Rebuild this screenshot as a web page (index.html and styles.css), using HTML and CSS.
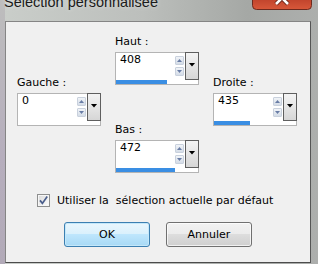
FILE: index.html
```html
<!DOCTYPE html>
<html lang="fr">
<head>
    <meta charset="UTF-8">
    <meta name="viewport" content="width=device-width, initial-scale=1.0">
    <title>Sélection personnalisée</title>
    <link rel="stylesheet" href="styles.css">
</head>
<body>
    <div class="window">
        <div class="titlebar">
            <span class="title">Sélection personnalisée</span>
            <svg class="close" width="60" height="10" viewBox="0 0 60 10">
                <defs>
                    <linearGradient id="closeFill" x1="0" y1="0" x2="0" y2="1">
                        <stop offset="0" stop-color="#c0432c"/>
                        <stop offset="1" stop-color="#d8583a"/>
                    </linearGradient>
                </defs>
                <path d="M0.5 -1 V5.5 Q0.5 9.5 4.5 9.5 H55.5 Q59.5 9.5 59.5 5.5 V-1" fill="url(#closeFill)" stroke="#6e2a1e"/>
                <path d="M24 4 L36 -8 M36 4 L24 -8" stroke="#6a2518" stroke-width="4.4"/>
                <path d="M24 4 L36 -8 M36 4 L24 -8" stroke="#ffffff" stroke-width="2.6"/>
            </svg>
        </div>

        <div class="client">
            <div class="fields">
                <!-- left column -->
                <div class="col col-side">
                    <div class="field">
                        <div class="field-label">Gauche :</div>
                        <div class="spin">
                            <span class="spin-value">0</span>
                            <span class="spin-arrows"><span class="arrow up"></span><span class="arrow down"></span></span>
                            <span class="spin-drop"></span>
                            <span class="spin-track"><span class="spin-bar" style="width: 0px"></span></span>
                        </div>
                    </div>
                </div>

                <!-- middle column -->
                <div class="col col-mid">
                    <div class="field">
                        <div class="field-label">Haut :</div>
                        <div class="spin">
                            <span class="spin-value">408</span>
                            <span class="spin-arrows"><span class="arrow up"></span><span class="arrow down"></span></span>
                            <span class="spin-drop"></span>
                            <span class="spin-track"><span class="spin-bar" style="width: 51px"></span></span>
                        </div>
                    </div>
                    <div class="field">
                        <div class="field-label">Bas :</div>
                        <div class="spin">
                            <span class="spin-value">472</span>
                            <span class="spin-arrows"><span class="arrow up"></span><span class="arrow down"></span></span>
                            <span class="spin-drop"></span>
                            <span class="spin-track"><span class="spin-bar" style="width: 59px"></span></span>
                        </div>
                    </div>
                </div>

                <!-- right column -->
                <div class="col col-side">
                    <div class="field">
                        <div class="field-label">Droite :</div>
                        <div class="spin">
                            <span class="spin-value">435</span>
                            <span class="spin-arrows"><span class="arrow up"></span><span class="arrow down"></span></span>
                            <span class="spin-drop"></span>
                            <span class="spin-track"><span class="spin-bar" style="width: 36px"></span></span>
                        </div>
                    </div>
                </div>
            </div>

            <label class="check-row">
                <svg class="checkbox" width="13" height="13" viewBox="0 0 13 13">
                    <defs>
                        <linearGradient id="boxFill" x1="0" y1="0" x2="1" y2="1">
                            <stop offset="0" stop-color="#dcdcdc"/>
                            <stop offset="1" stop-color="#fbfbfb"/>
                        </linearGradient>
                    </defs>
                    <rect x="0.5" y="0.5" width="12" height="12" fill="#f6f6f6" stroke="#8e8f8f"/>
                    <rect x="2" y="2" width="9" height="9" fill="url(#boxFill)"/>
                    <path d="M3 6.4 L5.4 9.4 L10.2 2.6" fill="none" stroke="#4a5e8c" stroke-width="1.7"/>
                </svg>
                <span>Utiliser la&nbsp; sélection actuelle par défaut</span>
            </label>

            <div class="buttons">
                <button class="btn btn-default">OK</button>
                <button class="btn">Annuler</button>
            </div>
        </div>
    </div>
</body>
</html>
```

FILE: styles.css
```css
body {
    margin: 0;
    font-family: "DejaVu Sans", sans-serif;
    font-size: 11px;
    color: #000;
}

.window {
    width: 318px;
    height: 264px;
    box-sizing: border-box;
    padding: 0 7px 1px 5px;
    display: flex;
    flex-direction: column;
    overflow: hidden;
    background:
        linear-gradient(to bottom, #bdbdbd, #b6aebd 60%, #b2aab8) 0 0 / 5px 100% no-repeat,
        linear-gradient(to right, #caceca 0%, #bcbfbc 45%, #a5a8a5 78%, #adafad 100%);
}

/* Title bar (cut at the top in the capture) */
.titlebar {
    height: 21px;
    margin: 0 -7px 0 -5px;
    padding-left: 4px;
    display: flex;
    justify-content: space-between;
    align-items: flex-start;
}

.title {
    font-family: "Liberation Sans", Arial, sans-serif;
    font-size: 14.5px;
    line-height: 16px;
    margin-top: -6px;
    color: #1b1b1b;
    text-shadow: 0 0 5px rgba(255, 255, 255, 0.6);
}

.close {
    display: block;
    margin-right: 6px;
}

/* Client area */
.client {
    flex: 1;
    background: #f0f0f0;
    border: 1px solid #858585;
    border-right-color: #555;
    border-bottom-color: #4c4c4c;
}

.fields {
    display: flex;
    gap: 14px;
    padding: 13px 0 0 11px;
}

.col {
    display: flex;
    flex-direction: column;
}

.col-side {
    margin-top: 41px;
}

.col-mid {
    gap: 38px;
}

.field-label {
    line-height: 14px;
    margin-bottom: 3px;
}

/* Spin box with dropdown and value bar */
.spin {
    width: 84px;
    height: 33px;
    box-sizing: border-box;
    border: 1px solid #b4b4b4;
    background: #fff;
    display: grid;
    grid-template-columns: 1fr 9px 13px;
    grid-template-rows: 27px 4px;
    column-gap: 1px;
}

.spin-value {
    padding-left: 4px;
    line-height: 14px;
}

.spin-arrows {
    display: flex;
    flex-direction: column;
    gap: 2px;
    padding-top: 3px;
}

.arrow {
    width: 9px;
    height: 9px;
    box-sizing: border-box;
    border: 1px solid #c9d1dd;
    border-radius: 1px;
    background: linear-gradient(#f1f4f8, #d4dce7);
    display: flex;
    align-items: center;
    justify-content: center;
}

.arrow::before {
    content: "";
    width: 5px;
    height: 3px;
    background: #687ca5;
}

.arrow.up::before {
    clip-path: polygon(50% 0, 100% 100%, 0 100%);
}

.arrow.down::before {
    clip-path: polygon(0 0, 100% 0, 50% 100%);
}

.spin-drop {
    margin: -1px -1px 0 0;
    border: 1px solid #5f5f5f;
    background: linear-gradient(#f4f4f4, #d6d6d6);
    display: flex;
    align-items: center;
    justify-content: center;
    padding-bottom: 3px;
}

.spin-drop::before {
    content: "";
    width: 7px;
    height: 4px;
    background: #000;
    clip-path: polygon(0 0, 100% 0, 50% 100%);
}

.spin-track {
    grid-column: 1 / -1;
    background: #fff;
}

.spin-bar {
    display: block;
    height: 100%;
    background: #3a8ee3;
}

/* Checkbox row */
.check-row {
    display: flex;
    align-items: center;
    gap: 7px;
    margin: 21px 0 0 31px;
    height: 13px;
    line-height: 13px;
}

.checkbox {
    display: block;
}

/* Buttons */
.buttons {
    display: flex;
    gap: 16px;
    margin: 15px 0 0 58px;
}

.btn {
    width: 86px;
    height: 25px;
    padding: 0;
    font-family: "DejaVu Sans", sans-serif;
    font-size: 11px;
    color: #000;
    border: 1px solid #707070;
    border-radius: 3px;
    background: linear-gradient(#f2f2f2 0%, #ebebeb 50%, #dddddd 50%, #cfcfcf 100%);
    box-shadow: inset 0 0 0 1px rgba(255, 255, 255, 0.7);
}

.btn-default {
    border-color: #3c7fb1;
    background: linear-gradient(#eaf6fd 0%, #d9f0fc 50%, #bee6fd 50%, #a7d9f5 100%);
    box-shadow: inset 0 0 0 1px #c4e8fa;
}
```
